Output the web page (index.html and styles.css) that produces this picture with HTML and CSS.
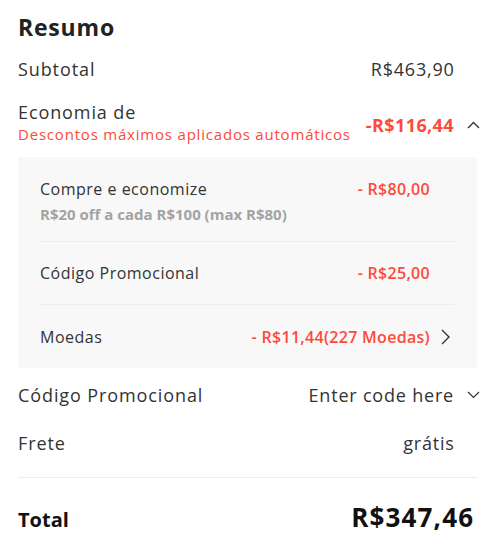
FILE: index.html
```html
<!DOCTYPE html>
<html lang="pt">
<head>
<meta charset="utf-8">
<title>Resumo</title>
<link rel="stylesheet" href="styles.css">
</head>
<body>
<div class="summary">
  <h2 class="title">Resumo</h2>

  <div class="row row-subtotal">
    <span class="label">Subtotal</span>
    <span class="val pad">R$463,90</span>
  </div>

  <div class="row row-economy">
    <div class="label-stack">
      <span class="label">Economia de</span>
      <span class="note">Descontos máximos aplicados automáticos</span>
    </div>
    <div class="val-wrap econ-wrap">
      <span class="val red strong">-R$116,44</span>
      <svg class="chev" width="13" height="8" viewBox="0 0 13 8"><path d="M1 7 L6.5 1.5 L12 7" fill="none" stroke="#333" stroke-width="1.4"/></svg>
    </div>
  </div>

  <div class="panel">
    <div class="prow first">
      <div class="label-stack">
        <span class="plabel">Compre e economize</span>
        <span class="psub">R$20 off a cada R$100 (max R$80)</span>
      </div>
      <span class="pval">- R$80,00</span>
    </div>
    <div class="prow">
      <span class="plabel">Código Promocional</span>
      <span class="pval">- R$25,00</span>
    </div>
    <div class="prow last">
      <span class="plabel">Moedas</span>
      <div class="pval-wrap">
        <span class="pval">- R$11,44(227 Moedas)</span>
        <svg class="pchev" width="9" height="16" viewBox="0 0 9 16"><path d="M1 1 L8 8 L1 15" fill="none" stroke="#333" stroke-width="1.4"/></svg>
      </div>
    </div>
  </div>

  <div class="row row-code">
    <span class="label">Código Promocional</span>
    <div class="val-wrap">
      <span class="val">Enter code here</span>
      <svg class="chev" width="13" height="8" viewBox="0 0 13 8"><path d="M1 1 L6.5 6.5 L12 1" fill="none" stroke="#333" stroke-width="1.2"/></svg>
    </div>
  </div>

  <div class="row row-ship">
    <span class="label">Frete</span>
    <span class="val pad">grátis</span>
  </div>

  <div class="row row-total">
    <span class="total-label">Total</span>
    <span class="total-val">R$347,46</span>
  </div>
</div>
</body>
</html>
```

FILE: styles.css
```css
html, body {
  margin: 0;
  padding: 0;
  background: #fff;
}
body {
  font-family: "Open Sans", "Noto Sans", sans-serif;
  color: #333;
}
.summary {
  width: 459px;
  padding: 12px 23px 0 18px;
}
.title {
  margin: 0;
  font-size: 23px;
  line-height: 30px;
  font-weight: 700;
  letter-spacing: 0.8px;
  color: #222;
}
.row {
  display: flex;
  justify-content: space-between;
  align-items: center;
}
.label {
  font-size: 18px;
  line-height: 24px;
  letter-spacing: 0.9px;
}
.val {
  font-size: 18px;
  line-height: 24px;
  letter-spacing: 0.8px;
}
.val.pad {
  margin-right: 22.3px;
}
.red { color: #fd4a3a; }
.val.strong {
  font-weight: 700;
  letter-spacing: 0.4px;
}
.val-wrap {
  display: flex;
  align-items: center;
  margin-right: -3px;
}
.econ-wrap {
  margin-top: 6px;
}
.chev {
  margin-left: 13px;
  display: block;
}
.label-stack {
  display: flex;
  flex-direction: column;
}
.note {
  font-size: 15px;
  line-height: 20px;
  letter-spacing: 0.8px;
  color: #fd4a3a;
}
.row-subtotal { margin-top: 15px; }
.row-economy { margin-top: 19px; }
.panel {
  margin-top: 13px;
  background: #f8f8f8;
  padding: 0 22px;
}
.prow {
  display: flex;
  justify-content: space-between;
  align-items: flex-start;
  border-bottom: 1px solid #ececec;
  padding: 20px 25px 20px 0;
}
.prow.first {
  padding-top: 21px;
  padding-bottom: 17px;
}
.prow.last {
  border-bottom: none;
  padding: 21px 0 20px 0;
}
.plabel {
  font-size: 16px;
  line-height: 22px;
  letter-spacing: 0.5px;
}
.psub {
  font-size: 15px;
  line-height: 20px;
  font-weight: 700;
  color: #a3a3a3;
  margin-top: 4px;
}
.pval {
  font-size: 16px;
  line-height: 22px;
  font-weight: 600;
  letter-spacing: 0.3px;
  color: #fd4a3a;
}
.pval-wrap {
  display: flex;
  align-items: center;
}
.pchev {
  display: block;
  margin-left: 11px;
  margin-right: 5px;
}
.row-code { margin-top: 15px; }
.row-ship { margin-top: 24px; }
.row-total {
  margin-top: 22px;
  border-top: 1px solid #ececec;
  padding-top: 22px;
  align-items: baseline;
}
.total-label {
  font-size: 20px;
  line-height: 34px;
  font-weight: 700;
  color: #111;
}
.total-val {
  font-size: 26px;
  line-height: 34px;
  font-weight: 700;
  letter-spacing: 1.15px;
  color: #111;
  margin-right: 2.8px;
}
```
